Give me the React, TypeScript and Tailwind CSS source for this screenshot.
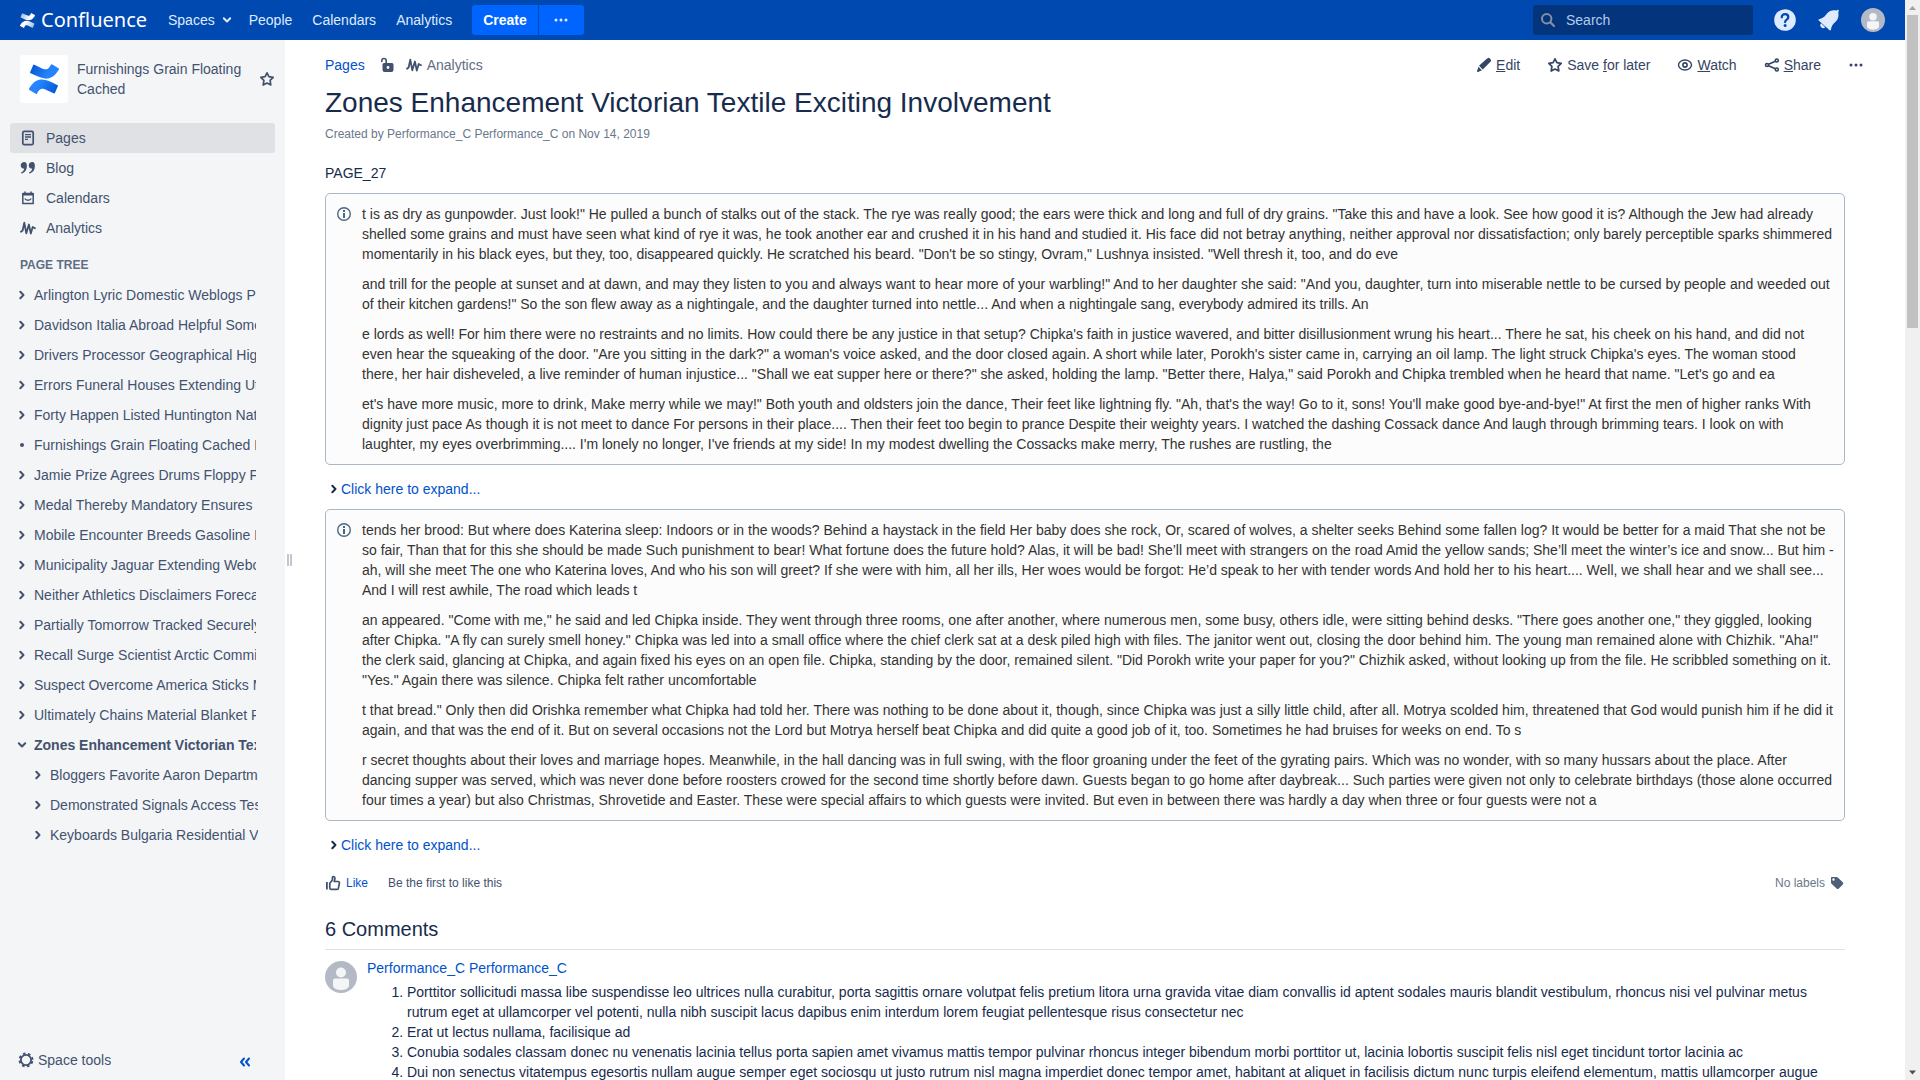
import React from "react";

type IconProps = { className?: string };

function AtlassianMark({ className, from, to }: IconProps & { from: string; to: string }) {
  const id = from.slice(1) + to.slice(1);
  return (
    <svg viewBox="0 0 64 64" className={className} aria-hidden="true">
      <defs>
        <linearGradient id={`a${id}`} x1="60" y1="68" x2="20" y2="45" gradientUnits="userSpaceOnUse">
          <stop offset="0" stopColor={from} />
          <stop offset="1" stopColor={to} />
        </linearGradient>
        <linearGradient id={`b${id}`} x1="4" y1="-4" x2="44" y2="19" gradientUnits="userSpaceOnUse">
          <stop offset="0" stopColor={from} />
          <stop offset="1" stopColor={to} />
        </linearGradient>
      </defs>
      <path
        fill={`url(#a${id})`}
        d="M2.3 49.2c-.7 1.1-1.4 2.3-2 3.3a2 2 0 0 0 .7 2.7l13.3 8.2a2 2 0 0 0 2.8-.7c.5-.9 1.200-2.100 2-3.300 5.300-8.800 10.600-7.700 20.200-3.100l13.200 6.300a2 2 0 0 0 2.700-1l6.300-14.300a2 2 0 0 0-1-2.600c-2.800-1.300-8.300-3.900-13.300-6.300C29.300 29.700 14.200 30.200 2.300 49.200z"
      />
      <path
        fill={`url(#b${id})`}
        d="M61.700 15c.7-1.100 1.400-2.300 2-3.300a2 2 0 0 0-.7-2.700L49.700.8a2 2 0 0 0-2.900.7c-.5.9-1.200 2.100-2 3.300-5.300 8.800-10.600 7.700-20.200 3.100L11.500 1.600a2 2 0 0 0-2.700 1L2.500 16.900a2 2 0 0 0 1 2.600c2.800 1.300 8.300 3.900 13.300 6.300 17.900 8.700 33 8.100 44.900-10.800z"
      />
    </svg>
  );
}

function Chevron({ className }: IconProps) {
  return (
    <svg viewBox="0 0 10 10" className={className} aria-hidden="true">
      <path d="M3.300 1.800 6.500 5 3.300 8.200" fill="none" stroke="currentColor" strokeWidth="2" strokeLinecap="round" strokeLinejoin="round" />
    </svg>
  );
}

function StarIcon({ className }: IconProps) {
  return (
    <svg viewBox="0 0 16 16" className={className} aria-hidden="true">
      <path d="M8 1.800 9.900 5.700 14.200 6.300 11.100 9.300 11.800 14 8 12 4.200 14 4.900 9.300 1.800 6.300 6.100 5.700Z" fill="none" stroke="currentColor" strokeWidth="1.700" strokeLinejoin="round" />
    </svg>
  );
}

function PageIcon({ className }: IconProps) {
  return (
    <svg viewBox="0 0 16 16" className={className} aria-hidden="true">
      <rect x="2.800" y="1.300" width="10.400" height="13.400" rx="1.500" fill="none" stroke="currentColor" strokeWidth="1.700" />
      <path d="M5 4.700h6M5 7h6M5 9.300h3" stroke="currentColor" strokeWidth="1.300" />
    </svg>
  );
}

function QuoteIcon({ className }: IconProps) {
  const mark = "M4.300 2C2.200 2 .7 3.500.7 5.400S2.200 8.600 4.200 8.500C4 10.300 2.900 11.600 1.400 12.300c-.7.4-.2 1.500.6 1.200C5.200 12.300 6.900 9.700 6.900 6 6.900 3.600 6 2 4.300 2Z";
  return (
    <svg viewBox="0 0 16 16" className={className} aria-hidden="true">
      <path d={mark} fill="currentColor" />
      <path d={mark} fill="currentColor" transform="translate(8 0)" />
    </svg>
  );
}

function CalendarIcon({ className }: IconProps) {
  return (
    <svg viewBox="0 0 16 16" className={className} aria-hidden="true">
      <path d="M2.800 3.500h10.400v10H2.800Z" fill="none" stroke="currentColor" strokeWidth="1.500" strokeLinejoin="round" />
      <path d="M2.500 3h11v2.600h-11zM4.200 1.500h1.500V4H4.200zM10.300 1.500h1.500V4h-1.500z" fill="currentColor" />
      <path d="M4.800 8.500c1 2.300 5.400 2.300 6.400 0" fill="none" stroke="currentColor" strokeWidth="1.300" />
    </svg>
  );
}

function AnalyticsIcon({ className }: IconProps) {
  return (
    <svg viewBox="0 0 16 16" className={className} aria-hidden="true">
      <path d="M1 11.800 2.600 10.500 4.300 2.700 6.300 13.300 8.900 4.500 10.800 13.500 12.700 7 15 8.200" fill="none" stroke="currentColor" strokeWidth="1.800" strokeLinecap="round" strokeLinejoin="round" />
    </svg>
  );
}

function UnlockIcon({ className }: IconProps) {
  return (
    <svg viewBox="0 0 16 16" className={className} aria-hidden="true">
      <path d="M2.800 4.400V3.700a2.200 2.200 0 0 1 4.400 0V7" fill="none" stroke="currentColor" strokeWidth="1.600" strokeLinecap="round" />
      <path fillRule="evenodd" d="M5 6h8a1.500 1.500 0 0 1 1.500 1.500V13a2 2 0 0 1-2 2H5.500a2 2 0 0 1-2-2V7.500A1.500 1.500 0 0 1 5 6Zm4 3.100a1.400 1.400 0 1 0 0 2.800 1.400 1.400 0 0 0 0-2.800Z" fill="currentColor" />
    </svg>
  );
}

function PencilIcon({ className }: IconProps) {
  return (
    <svg viewBox="0 0 16 16" className={className} aria-hidden="true">
      <path d="M10.800 1.700 11.600 1.200a1.500 1.500 0 0 1 2 .1l1.100 1.200a1.500 1.500 0 0 1 0 2L6.800 12.600 3 8.800ZM2.400 9.800l3.500 3.500L2 15a.7.700 0 0 1-.9-.9Z" fill="currentColor" />
    </svg>
  );
}

function EyeIcon({ className }: IconProps) {
  return (
    <svg viewBox="0 0 16 16" className={className} aria-hidden="true">
      <ellipse cx="8" cy="8" rx="6.500" ry="5" fill="none" stroke="currentColor" strokeWidth="1.400" />
      <circle cx="8" cy="8" r="2.100" fill="none" stroke="currentColor" strokeWidth="1.600" />
    </svg>
  );
}

function ShareIcon({ className }: IconProps) {
  return (
    <svg viewBox="0 0 16 16" className={className} aria-hidden="true">
      <g fill="none" stroke="currentColor" strokeWidth="1.600">
        <circle cx="3" cy="8" r="1.500" />
        <circle cx="12.800" cy="3.500" r="1.500" />
        <circle cx="12.800" cy="12.500" r="1.500" />
        <path d="M4.500 7.300 11.400 4.200M4.500 8.700l6.900 3.100" />
      </g>
    </svg>
  );
}

function DotsIcon({ className }: IconProps) {
  return (
    <svg viewBox="0 0 16 16" className={className} aria-hidden="true">
      <circle cx="3" cy="8" r="1.500" fill="currentColor" />
      <circle cx="8" cy="8" r="1.500" fill="currentColor" />
      <circle cx="13" cy="8" r="1.500" fill="currentColor" />
    </svg>
  );
}

function SearchIcon({ className }: IconProps) {
  return (
    <svg viewBox="0 0 16 16" className={className} aria-hidden="true">
      <circle cx="6.700" cy="6.700" r="4.700" fill="none" stroke="currentColor" strokeWidth="2" />
      <path d="m10.300 10.300 3.700 3.700" stroke="currentColor" strokeWidth="2.200" strokeLinecap="round" />
    </svg>
  );
}

function HelpIcon({ className }: IconProps) {
  return (
    <svg viewBox="0 0 24 24" className={className} aria-hidden="true">
      <circle cx="12" cy="12" r="10.800" fill="#deebff" />
      <path d="M8.800 9.300C8.800 7.400 10.100 6.200 12 6.200s3.300 1.200 3.300 3c0 2.400-3.200 2.400-3.200 4.900" fill="none" stroke="#0049b0" strokeWidth="2.300" strokeLinecap="round" />
      <circle cx="12.100" cy="17.400" r="1.500" fill="#0049b0" />
    </svg>
  );
}

function BellIcon({ className }: IconProps) {
  return (
    <svg viewBox="0 0 24 24" className={className} aria-hidden="true">
      <path d="M2 11.200C6.500 10.200 8 8 10 5.500 12.500 2.600 15.500 2 19.200 2.500l1.300-.6a1 1 0 0 1 1.300 1.200l-.5 1.200c.6 4 0 7-2.700 9.500-2.400 2.200-4.100 4-4.700 7.900a.8.800 0 0 1-1.300.5L1.700 12.400a.7.700 0 0 1 .3-1.200Z" fill="#deebff" />
      <path d="M4.200 15.200a2.700 2.700 0 1 0 4 4Z" fill="#deebff" />
    </svg>
  );
}

function Avatar({ className }: IconProps) {
  return (
    <svg viewBox="0 0 32 32" className={className} role="img" aria-label="User profile picture">
      <circle cx="16" cy="16" r="16" fill="#b3bac5" />
      <circle cx="16" cy="11.500" r="5" fill="#f4f5f7" />
      <path d="M10 17.500h12a2 2 0 0 1 2 2V25c-1 3-4.500 4-8 4s-7-1-8-4v-5.500a2 2 0 0 1 2-2Z" fill="#f4f5f7" />
    </svg>
  );
}

function InfoIcon({ className }: IconProps) {
  return (
    <svg viewBox="0 0 16 16" className={className} aria-hidden="true">
      <circle cx="8" cy="8" r="6.300" fill="none" stroke="currentColor" strokeWidth="1.400" />
      <path d="M7 7h2v5H7zM7 4h2v2H7z" fill="currentColor" />
    </svg>
  );
}

function GearIcon({ className }: IconProps) {
  return (
    <svg viewBox="0 0 16 16" className={className} aria-hidden="true">
      <circle cx="8" cy="8" r="5.100" fill="none" stroke="currentColor" strokeWidth="1.800" />
      <circle cx="8" cy="8" r="6.500" fill="none" stroke="currentColor" strokeWidth="1.900" strokeDasharray="2.600 2.500" strokeDashoffset="-1.250" />
    </svg>
  );
}

function ThumbIcon({ className }: IconProps) {
  return (
    <svg viewBox="0 0 16 16" className={className} aria-hidden="true">
      <path d="M1.900 7v7.500" stroke="currentColor" strokeWidth="1.800" />
      <path d="M4.800 13V8.300L7.400 5V2.600c0-1.500 2.500-1.500 2.500.6 0 1.300-.4 2.300-.7 3.300h3.800c1 0 1.600.8 1.400 1.700l-1 5c-.2.800-.7 1.200-1.500 1.200H6.500c-1 0-1.700-.6-1.700-1.400Z" fill="none" stroke="currentColor" strokeWidth="1.700" strokeLinejoin="round" />
    </svg>
  );
}

function LabelIcon({ className }: IconProps) {
  return (
    <svg viewBox="0 0 16 16" className={className} aria-hidden="true">
      <path fillRule="evenodd" d="M2.500 2h5c.5 0 .9.200 1.300.5l5 4.800a1.500 1.500 0 0 1 0 2.100l-4 4.100a1.500 1.500 0 0 1-2.200 0L2.500 8.700A2 2 0 0 1 2 7.400V2.500c0-.3.200-.5.500-.5Zm2 1.300a1.200 1.200 0 1 0 0 2.400 1.200 1.200 0 0 0 0-2.400Z" fill="currentColor" />
    </svg>
  );
}

const treeItems: string[] = [
  "Arlington Lyric Domestic Weblogs Pairs",
  "Davidson Italia Abroad Helpful Somewhat",
  "Drivers Processor Geographical Highway",
  "Errors Funeral Houses Extending Utah",
  "Forty Happen Listed Huntington Nations",
  "Furnishings Grain Floating Cached Home",
  "Jamie Prize Agrees Drums Floppy Figures",
  "Medal Thereby Mandatory Ensures",
  "Mobile Encounter Breeds Gasoline Home",
  "Municipality Jaguar Extending Webcams",
  "Neither Athletics Disclaimers Forecasts",
  "Partially Tomorrow Tracked Securely",
  "Recall Surge Scientist Arctic Committee",
  "Suspect Overcome America Sticks Moved",
  "Ultimately Chains Material Blanket Ports",
];

const childItems: string[] = [
  "Bloggers Favorite Aaron Departments",
  "Demonstrated Signals Access Tested",
  "Keyboards Bulgaria Residential Values",
];

const firstPanel: string[] = [
  `t is as dry as gunpowder. Just look!" He pulled a bunch of stalks out of the stack. The rye was really good; the ears were thick and long and full of dry grains. "Take this and have a look. See how good it is? Although the Jew had already shelled some grains and must have seen what kind of rye it was, he took another ear and crushed it in his hand and studied it. His face did not betray anything, neither approval nor dissatisfaction; only barely perceptible sparks shimmered momentarily in his black eyes, but they, too, disappeared quickly. He scratched his beard. "Don't be so stingy, Ovram," Lushnya insisted. "Well thresh it, too, and do eve`,
  `and trill for the people at sunset and at dawn, and may they listen to you and always want to hear more of your warbling!" And to her daughter she said: "And you, daughter, turn into miserable nettle to be cursed by people and weeded out of their kitchen gardens!" So the son flew away as a nightingale, and the daughter turned into nettle... And when a nightingale sang, everybody admired its trills. An`,
  `e lords as well! For him there were no restraints and no limits. How could there be any justice in that setup? Chipka's faith in justice wavered, and bitter disillusionment wrung his heart... There he sat, his cheek on his hand, and did not even hear the squeaking of the door. "Are you sitting in the dark?" a woman's voice asked, and the door closed again. A short while later, Porokh's sister came in, carrying an oil lamp. The light struck Chipka's eyes. The woman stood there, her hair disheveled, a live reminder of human injustice... "Shall we eat supper here or there?" she asked, holding the lamp. "Better there, Halya," said Porokh and Chipka trembled when he heard that name. "Let's go and ea`,
  `et's have more music, more to drink, Make merry while we may!" Both youth and oldsters join the dance, Their feet like lightning fly. "Ah, that's the way! Go to it, sons! You'll make good bye-and-bye!" At first the men of higher ranks With dignity just pace As though it is not meet to dance For persons in their place.... Then their feet too begin to prance Despite their weighty years. I watched the dashing Cossack dance And laugh through brimming tears. I look on with laughter, my eyes overbrimming.... I'm lonely no longer, I've friends at my side! In my modest dwelling the Cossacks make merry, The rushes are rustling, the`,
];

const secondPanel: string[] = [
  `tends her brood: But where does Katerina sleep: Indoors or in the woods? Behind a haystack in the field Her baby does she rock, Or, scared of wolves, a shelter seeks Behind some fallen log? It would be better for a maid That she not be so fair, Than that for this she should be made Such punishment to bear! What fortune does the future hold? Alas, it will be bad! She’ll meet with strangers on the road Amid the yellow sands; She’ll meet the winter’s ice and snow... But him - ah, will she meet The one who Katerina loves, And who his son will greet? If she were with him, all her ills, Her woes would be forgot: He’d speak to her with tender words And hold her to his heart.... Well, we shall hear and we shall see... And I will rest awhile, The road which leads t`,
  `an appeared. "Come with me," he said and led Chipka inside. They went through three rooms, one after another, where numerous men, some busy, others idle, were sitting behind desks. "There goes another one," they giggled, looking after Chipka. "A fly can surely smell honey." Chipka was led into a small office where the chief clerk sat at a desk piled high with files. The janitor went out, closing the door behind him. The young man remained alone with Chizhik. "Aha!" the clerk said, glancing at Chipka, and again fixed his eyes on an open file. Chipka, standing by the door, remained silent. "Did Porokh write your paper for you?" Chizhik asked, without looking up from the file. He scribbled something on it. "Yes." Again there was silence. Chipka felt rather uncomfortable`,
  `t that bread." Only then did Orishka remember what Chipka had told her. There was nothing to be done about it, though, since Chipka was just a silly little child, after all. Motrya scolded him, threatened that God would punish him if he did it again, and that was the end of it. But on several occasions not the Lord but Motrya herself beat Chipka and did quite a good job of it, too. Sometimes he had bruises for weeks on end. To s`,
  `r secret thoughts about their loves and marriage hopes. Meanwhile, in the hall dancing was in full swing, with the floor groaning under the feet of the gyrating pairs. Which was no wonder, with so many hussars about the place. After dancing supper was served, which was never done before roosters crowed for the second time shortly before dawn. Guests began to go home after daybreak... Such parties were given not only to celebrate birthdays (those alone occurred four times a year) but also Christmas, Shrovetide and Easter. These were special affairs to which guests were invited. But even in between there was hardly a day when three or four guests were not a`,
];

const commentItems: string[] = [
  "Porttitor sollicitudi massa libe suspendisse leo ultrices nulla curabitur, porta sagittis ornare volutpat felis pretium litora urna gravida vitae diam convallis id aptent sodales mauris blandit vestibulum, rhoncus nisi vel pulvinar metus rutrum eget at ullamcorper vel potenti, nulla nibh suscipit lacus dapibus enim interdum lorem feugiat pellentesque risus consectetur nec",
  "Erat ut lectus nullama, facilisique ad",
  "Conubia sodales classam donec nu venenatis lacinia tellus porta sapien amet vivamus mattis tempor pulvinar rhoncus integer bibendum morbi porttitor ut, lacinia lobortis suscipit felis nisl eget tincidunt tortor lacinia ac",
  "Dui non senectus vitatempus egesortis nullam augue semper eget sociosqu ut justo rutrum nisl magna imperdiet donec tempor amet, habitant at aliquet in facilisis dictum nunc turpis eleifend elementum, mattis ullamcorper augue",
];

function InfoPanel({ paragraphs }: { paragraphs: string[] }) {
  return (
    <section className="flex gap-2.5 rounded-[5px] border border-[#aab8c6] bg-[#fcfcfc] p-2.5 text-[#333333]">
      <InfoIcon className="mt-0.5 size-4 shrink-0 text-[#4a6785]" />
      <div className="flex flex-1 flex-col gap-2.5">
        {paragraphs.map((text) => (
          <p key={text.slice(0, 20)}>{text}</p>
        ))}
      </div>
    </section>
  );
}

function Expander() {
  return (
    <button type="button" className="mt-3.5 mb-2.5 flex h-5 items-center gap-0.5 pl-1 text-[#0052cc]">
      <Chevron className="size-2.5 text-[#172b4d]" />
      Click here to expand...
    </button>
  );
}

const sideLinks = [
  { label: "Pages", Icon: PageIcon, active: true },
  { label: "Blog", Icon: QuoteIcon, active: false },
  { label: "Calendars", Icon: CalendarIcon, active: false },
  { label: "Analytics", Icon: AnalyticsIcon, active: false },
];

function TopBar() {
  return (
    <header className="flex h-10 shrink-0 items-center bg-[#0049b0] px-5 text-[#deebff]">
      <a href="#home" className="flex w-32 items-center gap-1.5 text-white">
        <AtlassianMark className="size-[15px]" from="#8fb3e6" to="#ffffff" />
        <span className="font-['Noto_Sans',sans-serif] text-xl leading-7">Confluence</span>
      </a>
      <nav className="flex items-center pl-5">
        <button type="button" className="flex items-center gap-[7px]">
          Spaces
          <Chevron className="size-2.5 rotate-90" />
        </button>
        <a href="#people" className="ml-[17px]">People</a>
        <a href="#calendars" className="ml-5">Calendars</a>
        <a href="#analytics" className="ml-5">Analytics</a>
        <div className="ml-5 flex gap-px">
          <button type="button" className="h-[30px] rounded-l-[3px] bg-[#0065ff] px-[11px] font-bold text-white">
            Create
          </button>
          <button type="button" aria-label="More create options" className="flex h-[30px] w-[45px] items-center justify-center rounded-r-[3px] bg-[#0065ff]">
            <DotsIcon className="size-4" />
          </button>
        </div>
      </nav>
      <label className="ml-auto flex h-[30px] w-[220px] items-center gap-2.5 rounded-[3px] bg-[#04347c] px-[7px]">
        <SearchIcon className="size-4 shrink-0 text-[#8290a6]" />
        <input type="search" aria-label="Search" placeholder="Search" className="w-full bg-transparent outline-none placeholder:text-[#b3cbed]" />
      </label>
      <button type="button" aria-label="Help" className="ml-5"><HelpIcon className="size-6" /></button>
      <button type="button" aria-label="Notifications" className="ml-5"><BellIcon className="size-6" /></button>
      <button type="button" aria-label="Profile" className="ml-5"><Avatar className="size-6" /></button>
    </header>
  );
}

function TreeRow({ label, marker, bold }: { label: string; marker: "closed" | "open" | "leaf"; bold?: boolean }) {
  return (
    <li className="flex h-[30px] items-center gap-[7px] overflow-hidden whitespace-nowrap">
      {marker === "leaf" ? (
        <span className="flex size-2.5 shrink-0 items-center justify-center">
          <span className="size-1 rounded-full bg-[#42526e]" />
        </span>
      ) : (
        <Chevron className={marker === "open" ? "size-2.5 shrink-0 rotate-90" : "size-2.5 shrink-0"} />
      )}
      <a href="#page" className={bold ? "font-bold" : ""}>{label}</a>
    </li>
  );
}

function Sidebar() {
  return (
    <aside className="flex w-[285px] shrink-0 flex-col bg-[#f4f5f7] text-[#42526e]">
      <div className="flex items-center py-[15px] pr-2.5 pl-5">
        <a href="#space" aria-label="Space home" className="flex size-12 items-center justify-center rounded-[3px] bg-white">
          <AtlassianMark className="size-[30px]" from="#0052cc" to="#2684ff" />
        </a>
        <a href="#space" className="ml-[9px] flex-1 leading-5">Furnishings Grain Floating Cached</a>
        <button type="button" aria-label="Add to my spaces"><StarIcon className="size-4" /></button>
      </div>
      <nav className="px-2.5 pt-[5px]">
        {sideLinks.map(({ label, Icon, active }) => (
          <a
            key={label}
            href={"#" + label.toLowerCase()}
            className={active ? "flex h-[30px] items-center gap-2.5 rounded-[3px] bg-[#dfe1e5] px-2.5" : "flex h-[30px] items-center gap-2.5 px-2.5"}
          >
            <Icon className="size-4" />
            {label}
          </a>
        ))}
      </nav>
      <h2 className="mt-3 px-5 text-xs leading-5 font-bold text-[#5e6c84]">PAGE TREE</h2>
      <ul className="mt-[5px] mr-[29px] ml-[17px]">
        {treeItems.map((label) => (
          <TreeRow key={label} label={label} marker={label.startsWith("Furnishings") ? "leaf" : "closed"} />
        ))}
        <TreeRow label="Zones Enhancement Victorian Textile" marker="open" bold />
      </ul>
      <ul className="mr-[27px] ml-[33px]">
        {childItems.map((label) => (
          <TreeRow key={label} label={label} marker="closed" />
        ))}
      </ul>
      <div className="mt-auto flex h-10 items-center justify-between pr-[33px] pl-[18px]">
        <button type="button" className="flex items-center gap-1">
          <GearIcon className="size-4" />
          Space tools
        </button>
        <button type="button" aria-label="Collapse sidebar" className="mt-1 text-[#0052cc]">
          <svg viewBox="0 0 14 12" className="h-3 w-3.5" aria-hidden="true">
            <path d="M6 2.500 3 6l3 3.500M11 2.500 8 6l3 3.500" fill="none" stroke="currentColor" strokeWidth="2" strokeLinecap="round" strokeLinejoin="round" />
          </svg>
        </button>
      </div>
    </aside>
  );
}

function PageActions() {
  return (
    <div className="flex items-center gap-[27px] text-[#344563]">
      <button type="button" className="flex items-center gap-1"><PencilIcon className="size-4" /><span><u>E</u>dit</span></button>
      <button type="button" className="flex items-center gap-1"><StarIcon className="size-4" /><span>Save <u>f</u>or later</span></button>
      <button type="button" className="flex items-center gap-1"><EyeIcon className="size-4" /><span><u>W</u>atch</span></button>
      <button type="button" className="flex items-center gap-1"><ShareIcon className="size-4" /><span><u>S</u>hare</span></button>
      <button type="button" aria-label="More actions"><DotsIcon className="size-4" /></button>
    </div>
  );
}

function Content() {
  return (
    <main className="min-w-0 flex-1 overflow-hidden bg-white pt-[15px] pr-[60px] pl-10 text-[#172b4d]">
      <div className="-mr-[19px] flex h-5 items-center justify-between">
        <div className="flex items-center">
          <a href="#pages" className="text-[#0052cc]">Pages</a>
          <button type="button" aria-label="Unrestricted" className="ml-3.5 text-[#42526e]"><UnlockIcon className="size-4" /></button>
          <a href="#analytics" className="ml-[11px] flex items-center gap-[5px] text-[#5e6c84]">
            <AnalyticsIcon className="size-4 text-[#42526e]" />
            Analytics
          </a>
        </div>
        <PageActions />
      </div>
      <h1 className="mt-3 text-[28px] leading-8">Zones Enhancement Victorian Textile Exciting Involvement</h1>
      <p className="mt-[5px] text-xs leading-5 text-[#6b778c]">Created by Performance_C Performance_C on Nov 14, 2019</p>
      <p className="mt-[19px] mb-2.5">PAGE_27</p>
      <InfoPanel paragraphs={firstPanel} />
      <Expander />
      <InfoPanel paragraphs={secondPanel} />
      <Expander />
      <div className="mt-[18px] flex h-5 items-center text-xs text-[#42526e]">
        <button type="button" className="flex items-center gap-[5px] text-[#0052cc]">
          <ThumbIcon className="size-4 text-[#42526e]" />
          Like
        </button>
        <span className="ml-5">Be the first to like this</span>
        <button type="button" className="ml-auto flex items-center gap-1 text-[#6b778c]">
          No labels
          <LabelIcon className="size-4 text-[#505f79]" />
        </button>
      </div>
      <section>
        <h2 className="mt-6 border-b border-[#dfe1e6] pb-2 text-xl leading-6">6 Comments</h2>
        <article className="flex gap-2.5 pt-2">
          <Avatar className="mt-[3px] size-8 shrink-0" />
          <div className="min-w-0 flex-1">
            <a href="#author" className="block text-[#0052cc]">Performance_C Performance_C</a>
            <ol className="mt-1 list-decimal pl-10">
              {commentItems.map((text) => (
                <li key={text.slice(0, 12)}>{text}</li>
              ))}
            </ol>
          </div>
        </article>
      </section>
    </main>
  );
}

function ScrollTrack() {
  return (
    <div aria-hidden="true" className="flex w-[15px] shrink-0 flex-col items-center bg-[#f0f0f0]">
      <svg viewBox="0 0 15 15" className="size-[15px] shrink-0"><path d="M4 10h7L7.500 6Z" fill="#a0a0a0" /></svg>
      <div className="h-[29%] w-[11px] bg-[#c1c1c1]" />
      <svg viewBox="0 0 15 15" className="mt-auto size-[15px] shrink-0"><path d="M4 5.500h7l-3.500 4Z" fill="#505050" /></svg>
    </div>
  );
}

export default function App() {
  return (
    <div className="flex h-screen overflow-hidden bg-white font-['Liberation_Sans',Arial,sans-serif] text-sm leading-5">
      <div className="flex min-w-0 flex-1 flex-col">
        <TopBar />
        <div className="flex min-h-0 flex-1">
          <div className="relative flex">
            <Sidebar />
            <div aria-hidden="true" className="absolute top-1/2 left-full -mt-1.5 ml-0.5 flex gap-px">
              <span className="h-3 w-0.5 bg-[#c1c7d0]" />
              <span className="h-3 w-0.5 bg-[#c1c7d0]" />
            </div>
          </div>
          <Content />
        </div>
      </div>
      <ScrollTrack />
    </div>
  );
}
